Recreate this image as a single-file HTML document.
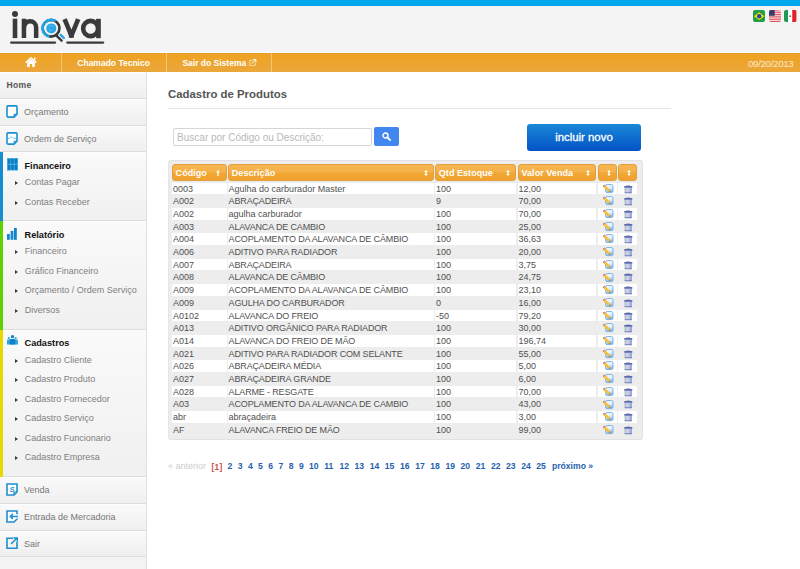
<!DOCTYPE html>
<html><head><meta charset="utf-8">
<style>
*{box-sizing:border-box;margin:0;padding:0}
html,body{width:800px;height:569px;overflow:hidden;background:#fff;font-family:"Liberation Sans",sans-serif;position:relative}
.abs{position:absolute}
#topbar{position:absolute;left:0;top:0;width:800px;height:6px;background:linear-gradient(#03a8ed 80%,#009ee8)}
#header{position:absolute;left:0;top:6px;width:800px;height:46px;background:#f4f4f4}
#logo{position:absolute;left:8px;top:8px}
.flag{position:absolute;top:9.6px;width:12.4px;height:12.4px;border-radius:2px;overflow:hidden}
.flag svg{display:block}
#nav{position:absolute;left:0;top:52.7px;width:800px;height:19.3px;background:linear-gradient(#f0a220,#eaa73b);box-shadow:inset 0 1px #e39a22}
#nav .sep{position:absolute;top:0;width:1px;height:19.3px;background:#f3c47a}
#nav .t{position:absolute;top:-0.2px;height:20px;line-height:20px;font-size:8.5px;font-weight:bold;color:#fff;white-space:nowrap}
#side{position:absolute;left:0;top:72px;width:146.5px;height:497px;background:#f3f3f3;border-right:1px solid #e2e2e2}
.mi{position:absolute;left:0;width:145.5px;background:linear-gradient(#fafafa,#efefef);border-bottom:1px solid #dddddd;box-shadow:inset 0 1px #fdfdfd}
.mi .tx{position:absolute;left:24px;font-size:9px;color:#777;white-space:nowrap}
.mi svg{position:absolute}
.mi+.mi>*,.sec>.hd,.sec>.sub,.sec>svg,.mi+.sec>*{margin-top:-0.5px}
.sec{position:absolute;left:0;width:145.5px;background:linear-gradient(#fafafa,#f0f0f0);border-bottom:1px solid #dddddd;box-shadow:inset 0 1px #fdfdfd}
.sec .bar{position:absolute;left:0;top:0;bottom:-1px;width:2.7px}
.sec .hd{position:absolute;left:24.5px;font-size:9.2px;font-weight:bold;color:#111;white-space:nowrap}
.sec .sub{position:absolute;left:24.7px;font-size:9px;color:#7f7f7f;white-space:nowrap}
.sec .arr{position:absolute;left:15.3px;width:0;height:0;border-left:3.2px solid #3a3a3a;border-top:2.6px solid transparent;border-bottom:2.6px solid transparent}
#title{position:absolute;left:168px;top:87.7px;font-size:11.4px;font-weight:bold;color:#555;white-space:nowrap}
#hr{position:absolute;left:168px;top:107.5px;width:502.6px;height:1px;background:#e6e6e6}
#search{position:absolute;left:173.3px;top:128.3px;width:198.8px;height:17.4px;border:1px solid #d6d6d6;border-radius:2px;background:#fff}
#search span{position:absolute;left:2.8px;top:2.7px;font-size:10px;color:#b8b8b8;white-space:nowrap}
#sbtn{position:absolute;left:374.4px;top:127.4px;width:24.4px;height:18.2px;background:#4187ef;border-radius:2px}
#inc{position:absolute;left:527.3px;top:124.4px;width:113.3px;height:27px;border-radius:3px;background:linear-gradient(#1a88d8,#0252c6);color:#fff;font-size:11.4px;text-align:center;line-height:27px;-webkit-text-stroke:0.3px #fff}
#tbl{position:absolute;left:168px;top:159.8px;width:475.2px;height:280.2px;background:#ededed;border-radius:3px;border:1px solid #e2e2e2;border-left-color:#e6e6e6}
.h{position:absolute;top:164.3px;height:16.3px;border-radius:3px;background:linear-gradient(#f7b551,#f5b24a 45%,#f2a733 55%,#f0a22c);border:1px solid #e29d3c}
.h b{position:absolute;left:2.6px;top:2.5px;font-size:9px;letter-spacing:0.05px;color:#fff;white-space:nowrap}
.h i{position:absolute;top:4.7px;width:4px;height:6px}
.h i svg{display:block}
.c{position:absolute}
.c span{position:absolute;top:1.1px;font-size:9px;color:#505050;white-space:nowrap}
.ic{position:absolute;display:block}
.ic svg{display:block}
#pag{position:absolute;left:0;top:460px}
#pag a{position:absolute;top:1.2px;font-size:8.6px;font-weight:bold;color:#1f62ad;white-space:nowrap}
</style></head><body>
<div id="topbar"></div>
<div id="header"></div>
<svg id="logo" width="100" height="40" viewBox="8 8 100 40">
  <circle cx="15.0" cy="14.0" r="3.0" fill="#3a3a3c"/>
  <rect x="12.7" y="18.7" width="4.6" height="19.4" fill="#3a3a3c"/>
  <path d="M23.95 38.1V27.4a6.1 6.1 0 0 1 12.2 0V38.1" fill="none" stroke="#3a3a3c" stroke-width="4.5"/>
  <rect x="21.7" y="18.7" width="4.5" height="9" fill="#3a3a3c"/>
  <circle cx="51.05" cy="28.25" r="8.4" fill="none" stroke="#38383a" stroke-width="2.6"/>
  <circle cx="51.05" cy="28.25" r="8.4" fill="none" stroke="#1fa6e8" stroke-width="2.6" stroke-dasharray="29.3 100" stroke-dashoffset="-14.8"/>
  <circle cx="51.3" cy="28.4" r="5.0" fill="#2aa8e6"/>
  <path d="M49.2 26.2l1.4 -1.1M51.8 25.3l0.9 1.4M49.6 29.6l1.7 1.1" stroke="#8fd3f3" stroke-width="0.8"/>
  <path d="M56.2 35.3L61.6 40.7" stroke="#38383a" stroke-width="2.4" stroke-linecap="round"/>
  <path d="M60.6 34.9L63.9 38.0" stroke="#1fa6e8" stroke-width="2.3" stroke-linecap="round"/>
  <path d="M64.6 19.2L71.4 35.6L78.2 19.2" fill="none" stroke="#3a3a3c" stroke-width="4.6" stroke-linejoin="round"/>
  <rect x="68.8" y="33.5" width="5.2" height="4.1" fill="#3a3a3c"/>
  <ellipse cx="90.6" cy="28.5" rx="7.45" ry="7.6" fill="none" stroke="#3a3a3c" stroke-width="4.6"/>
  <rect x="96.1" y="18.8" width="4.7" height="19.4" fill="#3a3a3c"/>
  <rect x="10" y="41.4" width="46.2" height="2.3" rx="1.15" fill="#3a3a3c"/>
  <rect x="66.1" y="41.4" width="38.2" height="2.3" rx="1.15" fill="#3a3a3c"/>
</svg>
<div class="flag" style="left:752.6px">
  <svg width="12.4" height="12.4" viewBox="0 0 12 12"><rect width="12" height="12" fill="#229e45"/><path d="M6 2.2L11 6L6 9.8L1 6z" fill="#f8e509"/><circle cx="6" cy="6" r="2.2" fill="#2b49a3"/></svg>
</div>
<div class="flag" style="left:768.5px">
  <svg width="12.4" height="12.4" viewBox="0 0 12 12"><rect width="12" height="12" fill="#fff"/><path d="M0 0.9h12M0 2.6h12M0 4.3h12M0 6h12M0 7.7h12M0 9.4h12M0 11.1h12" stroke="#d9333f" stroke-width="0.85"/><rect width="5.5" height="5.6" fill="#3c3b6e"/></svg>
</div>
<div class="flag" style="left:784.2px">
  <svg width="12.4" height="12.4" viewBox="0 0 12 12"><rect width="4" height="12" fill="#1f9a52"/><rect x="4" width="4" height="12" fill="#fff"/><rect x="8" width="4" height="12" fill="#e3202b"/><circle cx="6" cy="6" r="0.9" fill="#8a6a2a"/></svg>
</div>

<div id="nav">
  <svg class="abs" style="left:25px;top:4.3px" width="12" height="10.2" viewBox="0 0 12 10.2"><path d="M0.7 5.6L6 0.9L11.3 5.6" fill="none" stroke="#fff" stroke-width="1.5"/><path d="M2.2 5.4L6 2.2L9.8 5.4V10.2H7.2V7H4.8V10.2H2.2z" fill="#fff"/><rect x="9" y="0.3" width="1.4" height="3.2" fill="#fff"/></svg>
  <div class="sep" style="left:61px"></div>
  <div class="t" style="left:77.3px">Chamado Tecnico</div>
  <div class="sep" style="left:166.3px"></div>
  <div class="t" style="left:182.4px">Sair do Sistema</div>
  <svg class="abs" style="left:249px;top:6.3px" width="7.5" height="7.5" viewBox="0 0 7.5 7.5"><path d="M4.2 1.2H0.8V6.7H6.3V3.6" fill="none" stroke="#f8dcae" stroke-width="1"/><path d="M2.8 4.7L6.6 0.9M4.4 0.6h2.5v2.5" fill="none" stroke="#fff" stroke-width="1"/></svg>
  <div class="sep" style="left:271.2px"></div>
  <div class="t" style="left:748px;top:1px;font-weight:normal;font-size:9.9px;letter-spacing:-0.4px;color:#fbe8c8">09/20/2013</div>
</div>

<div id="side">
  <div class="mi" style="top:0;height:27px;background:linear-gradient(#f9f9f9,#efefef)"><div class="tx" style="left:6.6px;top:8.1px;font-weight:bold;color:#555;font-size:8.6px;letter-spacing:0.25px">Home</div></div>
  <div class="mi" style="top:27px;height:26.7px">
    <svg style="left:6.2px;top:6.5px" width="12" height="13" viewBox="0 0 12 13"><path d="M2 0.9h8q1 0 1 1v7.2l-3 3H2q-1 0-1-1V1.9q0-1 1-1z" fill="#fff" stroke="#1c8fd1" stroke-width="1.6"/><path d="M8.2 12V9.3h2.8" fill="none" stroke="#1c8fd1" stroke-width="1.1"/></svg>
    <div class="tx" style="top:8.9px">Orçamento</div></div>
  <div class="mi" style="top:53.7px;height:26.3px">
    <svg style="left:6.2px;top:6.8px" width="12" height="13" viewBox="0 0 12 13"><path d="M2 0.9h8q1 0 1 1v7.2l-3 3H2q-1 0-1-1V1.9q0-1 1-1z" fill="#fff" stroke="#1c8fd1" stroke-width="1.6"/><path d="M8.2 12V9.3h2.8" fill="none" stroke="#1c8fd1" stroke-width="1.1"/><path d="M2 6.6Q3.5 6.4 4.6 5.3Q5.5 4.5 6.4 5.5Q7.6 6.6 10 6.4" fill="none" stroke="#5ec3ea" stroke-width="0.9"/></svg>
    <div class="tx" style="top:8.7px">Ordem de Serviço</div></div>

  <div class="sec" style="top:80px;height:69px">
    <div class="bar" style="background:#178ccf"></div>
    <svg style="position:absolute;left:6.9px;top:6.6px" width="11" height="12.6" viewBox="0 0 11 12.6"><rect width="11" height="12.6" fill="#4fb2e6"/><rect x="0.8" y="0.8" width="2.6" height="5" fill="#0a7cc4"/><rect x="4.2" y="0.8" width="2.6" height="5" fill="#0a7cc4"/><rect x="7.6" y="0.8" width="2.6" height="5" fill="#0a7cc4"/><rect x="0.8" y="6.8" width="2.6" height="5" fill="#0a7cc4"/><rect x="4.2" y="6.8" width="2.6" height="5" fill="#0a7cc4"/><rect x="7.6" y="6.8" width="2.6" height="5" fill="#0a7cc4"/></svg>
    <div class="hd" style="top:9.5px">Financeiro</div>
    <i class="arr" style="top:8.2px;margin-top:20.9px"></i><div class="sub" style="top:25.5px">Contas Pagar</div>
    <i class="arr" style="top:27.7px;margin-top:20.9px"></i><div class="sub" style="top:45.0px">Contas Receber</div>
  </div>

  <div class="sec" style="top:149px;height:108.8px">
    <div class="bar" style="background:#5fd000"></div>
    <svg style="position:absolute;left:7.2px;top:7.5px" width="10" height="12" viewBox="0 0 10 12"><rect x="0" y="6" width="2.8" height="5.8" fill="#1185cc"/><rect x="3.6" y="2.9" width="2.8" height="8.9" fill="#1789d0"/><rect x="7" y="0" width="2.8" height="11.8" fill="#1185cc"/></svg>
    <div class="hd" style="top:9.2px">Relatório</div>
    <i class="arr" style="top:8.2px;margin-top:20.9px"></i><div class="sub" style="top:25.5px">Financeiro</div>
    <i class="arr" style="top:27.7px;margin-top:20.9px"></i><div class="sub" style="top:45.0px">Gráfico Financeiro</div>
    <i class="arr" style="top:47.2px;margin-top:20.9px"></i><div class="sub" style="top:64.5px">Orçamento / Ordem Serviço</div>
    <i class="arr" style="top:66.7px;margin-top:20.9px"></i><div class="sub" style="top:84.0px">Diversos</div>
  </div>

  <div class="sec" style="top:257.8px;height:147.1px">
    <div class="bar" style="background:#e6d800"></div>
    <svg style="position:absolute;left:6.6px;top:6.1px" width="11" height="10" viewBox="0 0 11 10"><circle cx="5.5" cy="1.7" r="1.65" fill="#0e82c8"/><circle cx="1.8" cy="3.2" r="1.1" fill="#3aa4e0"/><circle cx="8.7" cy="3.2" r="1.1" fill="#3aa4e0"/><path d="M0 5.6q0-1 1-1h9q1 0 1 1v3.9h-11z" fill="#3aa4e0"/><path d="M2.6 9.5V5.3q0-1.4 1.4-1.4h3q1.4 0 1.4 1.4V9.5z" fill="#0e82c8"/></svg>
    <div class="hd" style="top:8.6px">Cadastros</div>
    <i class="arr" style="top:8.2px;margin-top:20.9px"></i><div class="sub" style="top:25.5px">Cadastro Cliente</div>
    <i class="arr" style="top:27.7px;margin-top:20.9px"></i><div class="sub" style="top:45.0px">Cadastro Produto</div>
    <i class="arr" style="top:47.2px;margin-top:20.9px"></i><div class="sub" style="top:64.5px">Cadastro Fornecedor</div>
    <i class="arr" style="top:66.7px;margin-top:20.9px"></i><div class="sub" style="top:84.0px">Cadastro Serviço</div>
    <i class="arr" style="top:86.2px;margin-top:20.9px"></i><div class="sub" style="top:103.5px">Cadastro Funcionario</div>
    <i class="arr" style="top:105.7px;margin-top:20.9px"></i><div class="sub" style="top:123.0px">Cadastro Empresa</div>
  </div>

  <div class="mi" style="top:404.9px;height:27px">
    <svg style="left:6.2px;top:6.1px" width="12" height="13" viewBox="0 0 12 13"><path d="M1 1h10v8l-3 3H1z" fill="#fff" stroke="#1c8fd1" stroke-width="1.6"/><path d="M8 12v-3h3" fill="none" stroke="#1c8fd1" stroke-width="1.2"/><text x="3.5" y="8.8" font-size="7.5" font-weight="bold" font-style="italic" fill="#1c8fd1" font-family="Liberation Sans">S</text></svg>
    <div class="tx" style="top:8.5px">Venda</div></div>
  <div class="mi" style="top:431.9px;height:27px">
    <svg style="left:6.2px;top:6.8px" width="12" height="13" viewBox="0 0 12 13"><path d="M11 4.2V1H1v11h7l3-3V8.6" fill="#fff" stroke="#1c8fd1" stroke-width="1.6"/><path d="M12 6.4H4.6M6.9 3.9L4.3 6.4L6.9 8.9" fill="none" stroke="#1c8fd1" stroke-width="1.5"/></svg>
    <div class="tx" style="top:8.5px">Entrada de Mercadoria</div></div>
  <div class="mi" style="top:458.9px;height:26px">
    <svg style="left:6.2px;top:6.5px" width="12" height="12" viewBox="0 0 12 12"><path d="M7 1.2H1v10h10V5" fill="none" stroke="#1c8fd1" stroke-width="1.6"/><path d="M5 7L10.5 1.5M7.5 1h3.8v3.8" fill="none" stroke="#1c8fd1" stroke-width="1.5"/></svg>
    <div class="tx" style="top:8.2px">Sair</div></div>
</div>

<div id="title">Cadastro de Produtos</div>
<div id="hr"></div>
<div id="search"><span>Buscar por Código ou Descrição:</span></div>
<div id="sbtn"><svg class="abs" style="left:8px;top:5px" width="9" height="9" viewBox="0 0 9 9"><circle cx="3.5" cy="3.5" r="2.5" fill="none" stroke="#fff" stroke-width="1.4"/><path d="M5.3 5.3L8 8" stroke="#fff" stroke-width="1.8" stroke-linecap="round"/></svg></div>
<div id="inc">incluir novo</div>

<div id="tbl"></div>
<div class="h" style="left:172px;width:54.7px"><b>Código</b><i style="right:6.0px"><svg class="si" width="4" height="6" viewBox="0 0 4 6"><path d="M2 0L4 2.4H2.7V6H1.3V2.4H0z" fill="#fff" fill-opacity="0.95"/></svg></i></div><div class="h" style="left:228.2px;width:205.5px"><b>Descrição</b><i style="right:5.0px"><svg class="si" width="4" height="6" viewBox="0 0 4 6"><path d="M2 0L3.8 2.1H2.7V3.9H3.8L2 6L0.2 3.9H1.3V2.1H0.2z" fill="#fff"/></svg></i></div><div class="h" style="left:435.2px;width:80.9px"><b>Qtd Estoque</b><i style="right:5.0px"><svg class="si" width="4" height="6" viewBox="0 0 4 6"><path d="M2 0L3.8 2.1H2.7V3.9H3.8L2 6L0.2 3.9H1.3V2.1H0.2z" fill="#fff"/></svg></i></div><div class="h" style="left:517.9px;width:78.4px"><b>Valor Venda</b><i style="right:5.0px"><svg class="si" width="4" height="6" viewBox="0 0 4 6"><path d="M2 0L3.8 2.1H2.7V3.9H3.8L2 6L0.2 3.9H1.3V2.1H0.2z" fill="#fff"/></svg></i></div><div class="h" style="left:598.2px;width:18.5px"><b></b><i style="right:5.0px"><svg class="si" width="4" height="6" viewBox="0 0 4 6"><path d="M2 0L3.8 2.1H2.7V3.9H3.8L2 6L0.2 3.9H1.3V2.1H0.2z" fill="#fff"/></svg></i></div><div class="h" style="left:618.1px;width:18.8px"><b></b><i style="right:5.0px"><svg class="si" width="4" height="6" viewBox="0 0 4 6"><path d="M2 0L3.8 2.1H2.7V3.9H3.8L2 6L0.2 3.9H1.3V2.1H0.2z" fill="#fff"/></svg></i></div>
<div class="c" style="left:172px;width:54.7px;top:182.50px;height:11.80px;background:#fff;"><span style="left:1.0px;">0003</span></div><div class="c" style="left:228.2px;width:205.5px;top:182.50px;height:11.80px;background:#fff;"><span style="left:0.4px;">Agulha do carburador Master</span></div><div class="c" style="left:435.2px;width:80.9px;top:182.50px;height:11.80px;background:#fff;"><span style="left:0.9px;">100</span></div><div class="c" style="left:517.9px;width:78.4px;top:182.50px;height:11.80px;background:#fff;"><span style="left:0.5px;">12,00</span></div><div class="c" style="left:598.2px;width:18.5px;top:182.50px;height:11.80px;background:#fff;"><i class="ic" style="left:4.4px;top:1.2px"><svg width="11" height="10" viewBox="0 0 11 10"><defs><linearGradient id="dg" x1="0" y1="0" x2="0.3" y2="1"><stop offset="0" stop-color="#f2f9ff"/><stop offset="0.55" stop-color="#e2f0fc"/><stop offset="1" stop-color="#86bdec"/></linearGradient></defs><rect x="2.6" y="0.5" width="7.4" height="8.1" rx="1.5" fill="url(#dg)" stroke="#68a6de" stroke-width="0.8"/><path d="M0.4 3.1L2.0 1.3L7.3 6.1L5.7 7.9z" fill="#f2b628"/><path d="M5.7 7.9L7.3 6.1L7.6 7.0L6.6 8.1z" fill="#5b5030" opacity="0.7"/><path d="M1.2 2.2L6.5 7.0" stroke="#fbe08a" stroke-width="0.5"/><path d="M-0.35 2.4L1.25 0.6L2.0 1.3L0.4 3.1z" fill="#e05a48"/></svg></i></div><div class="c" style="left:618.1px;width:18.8px;top:182.50px;height:11.80px;background:#fff;"><i class="ic" style="left:4.6px;top:1.0px"><svg width="10" height="10" viewBox="0 0 10 10"><defs><linearGradient id="tg" x1="0" y1="0" x2="1" y2="0"><stop offset="0" stop-color="#a9b0c6"/><stop offset="0.35" stop-color="#d4d8e2"/><stop offset="0.7" stop-color="#b3bfe6"/><stop offset="1" stop-color="#7f92d8"/></linearGradient></defs><path d="M1.6 3.5h7.2v5.2q0 0.5-0.5 0.5h-6.2q-0.5 0-0.5-0.5z" fill="url(#tg)"/><rect x="1.8" y="8.2" width="6.8" height="1.0" fill="#5f6fae" opacity="0.8"/><path d="M1.3 2.4q0-0.5 0.6-0.5h6.8q0.6 0 0.6 0.5v1.3h-8z" fill="#5a69b0"/><rect x="3.2" y="1.1" width="4" height="1.0" rx="0.5" fill="#b8bccb"/></svg></i></div>
<div class="c" style="left:172px;width:54.7px;top:195.20px;height:11.80px;"><span style="left:1.0px;">A002</span></div><div class="c" style="left:228.2px;width:205.5px;top:195.20px;height:11.80px;"><span style="left:0.4px;letter-spacing:-0.15px;">ABRAÇADEIRA</span></div><div class="c" style="left:435.2px;width:80.9px;top:195.20px;height:11.80px;"><span style="left:0.9px;">9</span></div><div class="c" style="left:517.9px;width:78.4px;top:195.20px;height:11.80px;"><span style="left:0.5px;">70,00</span></div><div class="c" style="left:598.2px;width:18.5px;top:195.20px;height:11.80px;"><i class="ic" style="left:4.4px;top:1.2px"><svg width="11" height="10" viewBox="0 0 11 10"><defs><linearGradient id="dg" x1="0" y1="0" x2="0.3" y2="1"><stop offset="0" stop-color="#f2f9ff"/><stop offset="0.55" stop-color="#e2f0fc"/><stop offset="1" stop-color="#86bdec"/></linearGradient></defs><rect x="2.6" y="0.5" width="7.4" height="8.1" rx="1.5" fill="url(#dg)" stroke="#68a6de" stroke-width="0.8"/><path d="M0.4 3.1L2.0 1.3L7.3 6.1L5.7 7.9z" fill="#f2b628"/><path d="M5.7 7.9L7.3 6.1L7.6 7.0L6.6 8.1z" fill="#5b5030" opacity="0.7"/><path d="M1.2 2.2L6.5 7.0" stroke="#fbe08a" stroke-width="0.5"/><path d="M-0.35 2.4L1.25 0.6L2.0 1.3L0.4 3.1z" fill="#e05a48"/></svg></i></div><div class="c" style="left:618.1px;width:18.8px;top:195.20px;height:11.80px;"><i class="ic" style="left:4.6px;top:1.0px"><svg width="10" height="10" viewBox="0 0 10 10"><defs><linearGradient id="tg" x1="0" y1="0" x2="1" y2="0"><stop offset="0" stop-color="#a9b0c6"/><stop offset="0.35" stop-color="#d4d8e2"/><stop offset="0.7" stop-color="#b3bfe6"/><stop offset="1" stop-color="#7f92d8"/></linearGradient></defs><path d="M1.6 3.5h7.2v5.2q0 0.5-0.5 0.5h-6.2q-0.5 0-0.5-0.5z" fill="url(#tg)"/><rect x="1.8" y="8.2" width="6.8" height="1.0" fill="#5f6fae" opacity="0.8"/><path d="M1.3 2.4q0-0.5 0.6-0.5h6.8q0.6 0 0.6 0.5v1.3h-8z" fill="#5a69b0"/><rect x="3.2" y="1.1" width="4" height="1.0" rx="0.5" fill="#b8bccb"/></svg></i></div>
<div class="c" style="left:172px;width:54.7px;top:207.90px;height:11.80px;background:#fff;"><span style="left:1.0px;">A002</span></div><div class="c" style="left:228.2px;width:205.5px;top:207.90px;height:11.80px;background:#fff;"><span style="left:0.4px;">agulha carburador</span></div><div class="c" style="left:435.2px;width:80.9px;top:207.90px;height:11.80px;background:#fff;"><span style="left:0.9px;">100</span></div><div class="c" style="left:517.9px;width:78.4px;top:207.90px;height:11.80px;background:#fff;"><span style="left:0.5px;">70,00</span></div><div class="c" style="left:598.2px;width:18.5px;top:207.90px;height:11.80px;background:#fff;"><i class="ic" style="left:4.4px;top:1.2px"><svg width="11" height="10" viewBox="0 0 11 10"><defs><linearGradient id="dg" x1="0" y1="0" x2="0.3" y2="1"><stop offset="0" stop-color="#f2f9ff"/><stop offset="0.55" stop-color="#e2f0fc"/><stop offset="1" stop-color="#86bdec"/></linearGradient></defs><rect x="2.6" y="0.5" width="7.4" height="8.1" rx="1.5" fill="url(#dg)" stroke="#68a6de" stroke-width="0.8"/><path d="M0.4 3.1L2.0 1.3L7.3 6.1L5.7 7.9z" fill="#f2b628"/><path d="M5.7 7.9L7.3 6.1L7.6 7.0L6.6 8.1z" fill="#5b5030" opacity="0.7"/><path d="M1.2 2.2L6.5 7.0" stroke="#fbe08a" stroke-width="0.5"/><path d="M-0.35 2.4L1.25 0.6L2.0 1.3L0.4 3.1z" fill="#e05a48"/></svg></i></div><div class="c" style="left:618.1px;width:18.8px;top:207.90px;height:11.80px;background:#fff;"><i class="ic" style="left:4.6px;top:1.0px"><svg width="10" height="10" viewBox="0 0 10 10"><defs><linearGradient id="tg" x1="0" y1="0" x2="1" y2="0"><stop offset="0" stop-color="#a9b0c6"/><stop offset="0.35" stop-color="#d4d8e2"/><stop offset="0.7" stop-color="#b3bfe6"/><stop offset="1" stop-color="#7f92d8"/></linearGradient></defs><path d="M1.6 3.5h7.2v5.2q0 0.5-0.5 0.5h-6.2q-0.5 0-0.5-0.5z" fill="url(#tg)"/><rect x="1.8" y="8.2" width="6.8" height="1.0" fill="#5f6fae" opacity="0.8"/><path d="M1.3 2.4q0-0.5 0.6-0.5h6.8q0.6 0 0.6 0.5v1.3h-8z" fill="#5a69b0"/><rect x="3.2" y="1.1" width="4" height="1.0" rx="0.5" fill="#b8bccb"/></svg></i></div>
<div class="c" style="left:172px;width:54.7px;top:220.60px;height:11.80px;"><span style="left:1.0px;">A003</span></div><div class="c" style="left:228.2px;width:205.5px;top:220.60px;height:11.80px;"><span style="left:0.4px;letter-spacing:-0.15px;">ALAVANCA DE CAMBIO</span></div><div class="c" style="left:435.2px;width:80.9px;top:220.60px;height:11.80px;"><span style="left:0.9px;">100</span></div><div class="c" style="left:517.9px;width:78.4px;top:220.60px;height:11.80px;"><span style="left:0.5px;">25,00</span></div><div class="c" style="left:598.2px;width:18.5px;top:220.60px;height:11.80px;"><i class="ic" style="left:4.4px;top:1.2px"><svg width="11" height="10" viewBox="0 0 11 10"><defs><linearGradient id="dg" x1="0" y1="0" x2="0.3" y2="1"><stop offset="0" stop-color="#f2f9ff"/><stop offset="0.55" stop-color="#e2f0fc"/><stop offset="1" stop-color="#86bdec"/></linearGradient></defs><rect x="2.6" y="0.5" width="7.4" height="8.1" rx="1.5" fill="url(#dg)" stroke="#68a6de" stroke-width="0.8"/><path d="M0.4 3.1L2.0 1.3L7.3 6.1L5.7 7.9z" fill="#f2b628"/><path d="M5.7 7.9L7.3 6.1L7.6 7.0L6.6 8.1z" fill="#5b5030" opacity="0.7"/><path d="M1.2 2.2L6.5 7.0" stroke="#fbe08a" stroke-width="0.5"/><path d="M-0.35 2.4L1.25 0.6L2.0 1.3L0.4 3.1z" fill="#e05a48"/></svg></i></div><div class="c" style="left:618.1px;width:18.8px;top:220.60px;height:11.80px;"><i class="ic" style="left:4.6px;top:1.0px"><svg width="10" height="10" viewBox="0 0 10 10"><defs><linearGradient id="tg" x1="0" y1="0" x2="1" y2="0"><stop offset="0" stop-color="#a9b0c6"/><stop offset="0.35" stop-color="#d4d8e2"/><stop offset="0.7" stop-color="#b3bfe6"/><stop offset="1" stop-color="#7f92d8"/></linearGradient></defs><path d="M1.6 3.5h7.2v5.2q0 0.5-0.5 0.5h-6.2q-0.5 0-0.5-0.5z" fill="url(#tg)"/><rect x="1.8" y="8.2" width="6.8" height="1.0" fill="#5f6fae" opacity="0.8"/><path d="M1.3 2.4q0-0.5 0.6-0.5h6.8q0.6 0 0.6 0.5v1.3h-8z" fill="#5a69b0"/><rect x="3.2" y="1.1" width="4" height="1.0" rx="0.5" fill="#b8bccb"/></svg></i></div>
<div class="c" style="left:172px;width:54.7px;top:233.30px;height:11.80px;background:#fff;"><span style="left:1.0px;">A004</span></div><div class="c" style="left:228.2px;width:205.5px;top:233.30px;height:11.80px;background:#fff;"><span style="left:0.4px;letter-spacing:-0.15px;">ACOPLAMENTO DA ALAVANCA DE CÂMBIO</span></div><div class="c" style="left:435.2px;width:80.9px;top:233.30px;height:11.80px;background:#fff;"><span style="left:0.9px;">100</span></div><div class="c" style="left:517.9px;width:78.4px;top:233.30px;height:11.80px;background:#fff;"><span style="left:0.5px;">36,63</span></div><div class="c" style="left:598.2px;width:18.5px;top:233.30px;height:11.80px;background:#fff;"><i class="ic" style="left:4.4px;top:1.2px"><svg width="11" height="10" viewBox="0 0 11 10"><defs><linearGradient id="dg" x1="0" y1="0" x2="0.3" y2="1"><stop offset="0" stop-color="#f2f9ff"/><stop offset="0.55" stop-color="#e2f0fc"/><stop offset="1" stop-color="#86bdec"/></linearGradient></defs><rect x="2.6" y="0.5" width="7.4" height="8.1" rx="1.5" fill="url(#dg)" stroke="#68a6de" stroke-width="0.8"/><path d="M0.4 3.1L2.0 1.3L7.3 6.1L5.7 7.9z" fill="#f2b628"/><path d="M5.7 7.9L7.3 6.1L7.6 7.0L6.6 8.1z" fill="#5b5030" opacity="0.7"/><path d="M1.2 2.2L6.5 7.0" stroke="#fbe08a" stroke-width="0.5"/><path d="M-0.35 2.4L1.25 0.6L2.0 1.3L0.4 3.1z" fill="#e05a48"/></svg></i></div><div class="c" style="left:618.1px;width:18.8px;top:233.30px;height:11.80px;background:#fff;"><i class="ic" style="left:4.6px;top:1.0px"><svg width="10" height="10" viewBox="0 0 10 10"><defs><linearGradient id="tg" x1="0" y1="0" x2="1" y2="0"><stop offset="0" stop-color="#a9b0c6"/><stop offset="0.35" stop-color="#d4d8e2"/><stop offset="0.7" stop-color="#b3bfe6"/><stop offset="1" stop-color="#7f92d8"/></linearGradient></defs><path d="M1.6 3.5h7.2v5.2q0 0.5-0.5 0.5h-6.2q-0.5 0-0.5-0.5z" fill="url(#tg)"/><rect x="1.8" y="8.2" width="6.8" height="1.0" fill="#5f6fae" opacity="0.8"/><path d="M1.3 2.4q0-0.5 0.6-0.5h6.8q0.6 0 0.6 0.5v1.3h-8z" fill="#5a69b0"/><rect x="3.2" y="1.1" width="4" height="1.0" rx="0.5" fill="#b8bccb"/></svg></i></div>
<div class="c" style="left:172px;width:54.7px;top:246.00px;height:11.80px;"><span style="left:1.0px;">A006</span></div><div class="c" style="left:228.2px;width:205.5px;top:246.00px;height:11.80px;"><span style="left:0.4px;letter-spacing:-0.15px;">ADITIVO PARA RADIADOR</span></div><div class="c" style="left:435.2px;width:80.9px;top:246.00px;height:11.80px;"><span style="left:0.9px;">100</span></div><div class="c" style="left:517.9px;width:78.4px;top:246.00px;height:11.80px;"><span style="left:0.5px;">20,00</span></div><div class="c" style="left:598.2px;width:18.5px;top:246.00px;height:11.80px;"><i class="ic" style="left:4.4px;top:1.2px"><svg width="11" height="10" viewBox="0 0 11 10"><defs><linearGradient id="dg" x1="0" y1="0" x2="0.3" y2="1"><stop offset="0" stop-color="#f2f9ff"/><stop offset="0.55" stop-color="#e2f0fc"/><stop offset="1" stop-color="#86bdec"/></linearGradient></defs><rect x="2.6" y="0.5" width="7.4" height="8.1" rx="1.5" fill="url(#dg)" stroke="#68a6de" stroke-width="0.8"/><path d="M0.4 3.1L2.0 1.3L7.3 6.1L5.7 7.9z" fill="#f2b628"/><path d="M5.7 7.9L7.3 6.1L7.6 7.0L6.6 8.1z" fill="#5b5030" opacity="0.7"/><path d="M1.2 2.2L6.5 7.0" stroke="#fbe08a" stroke-width="0.5"/><path d="M-0.35 2.4L1.25 0.6L2.0 1.3L0.4 3.1z" fill="#e05a48"/></svg></i></div><div class="c" style="left:618.1px;width:18.8px;top:246.00px;height:11.80px;"><i class="ic" style="left:4.6px;top:1.0px"><svg width="10" height="10" viewBox="0 0 10 10"><defs><linearGradient id="tg" x1="0" y1="0" x2="1" y2="0"><stop offset="0" stop-color="#a9b0c6"/><stop offset="0.35" stop-color="#d4d8e2"/><stop offset="0.7" stop-color="#b3bfe6"/><stop offset="1" stop-color="#7f92d8"/></linearGradient></defs><path d="M1.6 3.5h7.2v5.2q0 0.5-0.5 0.5h-6.2q-0.5 0-0.5-0.5z" fill="url(#tg)"/><rect x="1.8" y="8.2" width="6.8" height="1.0" fill="#5f6fae" opacity="0.8"/><path d="M1.3 2.4q0-0.5 0.6-0.5h6.8q0.6 0 0.6 0.5v1.3h-8z" fill="#5a69b0"/><rect x="3.2" y="1.1" width="4" height="1.0" rx="0.5" fill="#b8bccb"/></svg></i></div>
<div class="c" style="left:172px;width:54.7px;top:258.70px;height:11.80px;background:#fff;"><span style="left:1.0px;">A007</span></div><div class="c" style="left:228.2px;width:205.5px;top:258.70px;height:11.80px;background:#fff;"><span style="left:0.4px;letter-spacing:-0.15px;">ABRAÇADEIRA</span></div><div class="c" style="left:435.2px;width:80.9px;top:258.70px;height:11.80px;background:#fff;"><span style="left:0.9px;">100</span></div><div class="c" style="left:517.9px;width:78.4px;top:258.70px;height:11.80px;background:#fff;"><span style="left:0.5px;">3,75</span></div><div class="c" style="left:598.2px;width:18.5px;top:258.70px;height:11.80px;background:#fff;"><i class="ic" style="left:4.4px;top:1.2px"><svg width="11" height="10" viewBox="0 0 11 10"><defs><linearGradient id="dg" x1="0" y1="0" x2="0.3" y2="1"><stop offset="0" stop-color="#f2f9ff"/><stop offset="0.55" stop-color="#e2f0fc"/><stop offset="1" stop-color="#86bdec"/></linearGradient></defs><rect x="2.6" y="0.5" width="7.4" height="8.1" rx="1.5" fill="url(#dg)" stroke="#68a6de" stroke-width="0.8"/><path d="M0.4 3.1L2.0 1.3L7.3 6.1L5.7 7.9z" fill="#f2b628"/><path d="M5.7 7.9L7.3 6.1L7.6 7.0L6.6 8.1z" fill="#5b5030" opacity="0.7"/><path d="M1.2 2.2L6.5 7.0" stroke="#fbe08a" stroke-width="0.5"/><path d="M-0.35 2.4L1.25 0.6L2.0 1.3L0.4 3.1z" fill="#e05a48"/></svg></i></div><div class="c" style="left:618.1px;width:18.8px;top:258.70px;height:11.80px;background:#fff;"><i class="ic" style="left:4.6px;top:1.0px"><svg width="10" height="10" viewBox="0 0 10 10"><defs><linearGradient id="tg" x1="0" y1="0" x2="1" y2="0"><stop offset="0" stop-color="#a9b0c6"/><stop offset="0.35" stop-color="#d4d8e2"/><stop offset="0.7" stop-color="#b3bfe6"/><stop offset="1" stop-color="#7f92d8"/></linearGradient></defs><path d="M1.6 3.5h7.2v5.2q0 0.5-0.5 0.5h-6.2q-0.5 0-0.5-0.5z" fill="url(#tg)"/><rect x="1.8" y="8.2" width="6.8" height="1.0" fill="#5f6fae" opacity="0.8"/><path d="M1.3 2.4q0-0.5 0.6-0.5h6.8q0.6 0 0.6 0.5v1.3h-8z" fill="#5a69b0"/><rect x="3.2" y="1.1" width="4" height="1.0" rx="0.5" fill="#b8bccb"/></svg></i></div>
<div class="c" style="left:172px;width:54.7px;top:271.40px;height:11.80px;"><span style="left:1.0px;">A008</span></div><div class="c" style="left:228.2px;width:205.5px;top:271.40px;height:11.80px;"><span style="left:0.4px;letter-spacing:-0.15px;">ALAVANCA DE CÂMBIO</span></div><div class="c" style="left:435.2px;width:80.9px;top:271.40px;height:11.80px;"><span style="left:0.9px;">100</span></div><div class="c" style="left:517.9px;width:78.4px;top:271.40px;height:11.80px;"><span style="left:0.5px;">24,75</span></div><div class="c" style="left:598.2px;width:18.5px;top:271.40px;height:11.80px;"><i class="ic" style="left:4.4px;top:1.2px"><svg width="11" height="10" viewBox="0 0 11 10"><defs><linearGradient id="dg" x1="0" y1="0" x2="0.3" y2="1"><stop offset="0" stop-color="#f2f9ff"/><stop offset="0.55" stop-color="#e2f0fc"/><stop offset="1" stop-color="#86bdec"/></linearGradient></defs><rect x="2.6" y="0.5" width="7.4" height="8.1" rx="1.5" fill="url(#dg)" stroke="#68a6de" stroke-width="0.8"/><path d="M0.4 3.1L2.0 1.3L7.3 6.1L5.7 7.9z" fill="#f2b628"/><path d="M5.7 7.9L7.3 6.1L7.6 7.0L6.6 8.1z" fill="#5b5030" opacity="0.7"/><path d="M1.2 2.2L6.5 7.0" stroke="#fbe08a" stroke-width="0.5"/><path d="M-0.35 2.4L1.25 0.6L2.0 1.3L0.4 3.1z" fill="#e05a48"/></svg></i></div><div class="c" style="left:618.1px;width:18.8px;top:271.40px;height:11.80px;"><i class="ic" style="left:4.6px;top:1.0px"><svg width="10" height="10" viewBox="0 0 10 10"><defs><linearGradient id="tg" x1="0" y1="0" x2="1" y2="0"><stop offset="0" stop-color="#a9b0c6"/><stop offset="0.35" stop-color="#d4d8e2"/><stop offset="0.7" stop-color="#b3bfe6"/><stop offset="1" stop-color="#7f92d8"/></linearGradient></defs><path d="M1.6 3.5h7.2v5.2q0 0.5-0.5 0.5h-6.2q-0.5 0-0.5-0.5z" fill="url(#tg)"/><rect x="1.8" y="8.2" width="6.8" height="1.0" fill="#5f6fae" opacity="0.8"/><path d="M1.3 2.4q0-0.5 0.6-0.5h6.8q0.6 0 0.6 0.5v1.3h-8z" fill="#5a69b0"/><rect x="3.2" y="1.1" width="4" height="1.0" rx="0.5" fill="#b8bccb"/></svg></i></div>
<div class="c" style="left:172px;width:54.7px;top:284.10px;height:11.80px;background:#fff;"><span style="left:1.0px;">A009</span></div><div class="c" style="left:228.2px;width:205.5px;top:284.10px;height:11.80px;background:#fff;"><span style="left:0.4px;letter-spacing:-0.15px;">ACOPLAMENTO DA ALAVANCA DE CÂMBIO</span></div><div class="c" style="left:435.2px;width:80.9px;top:284.10px;height:11.80px;background:#fff;"><span style="left:0.9px;">100</span></div><div class="c" style="left:517.9px;width:78.4px;top:284.10px;height:11.80px;background:#fff;"><span style="left:0.5px;">23,10</span></div><div class="c" style="left:598.2px;width:18.5px;top:284.10px;height:11.80px;background:#fff;"><i class="ic" style="left:4.4px;top:1.2px"><svg width="11" height="10" viewBox="0 0 11 10"><defs><linearGradient id="dg" x1="0" y1="0" x2="0.3" y2="1"><stop offset="0" stop-color="#f2f9ff"/><stop offset="0.55" stop-color="#e2f0fc"/><stop offset="1" stop-color="#86bdec"/></linearGradient></defs><rect x="2.6" y="0.5" width="7.4" height="8.1" rx="1.5" fill="url(#dg)" stroke="#68a6de" stroke-width="0.8"/><path d="M0.4 3.1L2.0 1.3L7.3 6.1L5.7 7.9z" fill="#f2b628"/><path d="M5.7 7.9L7.3 6.1L7.6 7.0L6.6 8.1z" fill="#5b5030" opacity="0.7"/><path d="M1.2 2.2L6.5 7.0" stroke="#fbe08a" stroke-width="0.5"/><path d="M-0.35 2.4L1.25 0.6L2.0 1.3L0.4 3.1z" fill="#e05a48"/></svg></i></div><div class="c" style="left:618.1px;width:18.8px;top:284.10px;height:11.80px;background:#fff;"><i class="ic" style="left:4.6px;top:1.0px"><svg width="10" height="10" viewBox="0 0 10 10"><defs><linearGradient id="tg" x1="0" y1="0" x2="1" y2="0"><stop offset="0" stop-color="#a9b0c6"/><stop offset="0.35" stop-color="#d4d8e2"/><stop offset="0.7" stop-color="#b3bfe6"/><stop offset="1" stop-color="#7f92d8"/></linearGradient></defs><path d="M1.6 3.5h7.2v5.2q0 0.5-0.5 0.5h-6.2q-0.5 0-0.5-0.5z" fill="url(#tg)"/><rect x="1.8" y="8.2" width="6.8" height="1.0" fill="#5f6fae" opacity="0.8"/><path d="M1.3 2.4q0-0.5 0.6-0.5h6.8q0.6 0 0.6 0.5v1.3h-8z" fill="#5a69b0"/><rect x="3.2" y="1.1" width="4" height="1.0" rx="0.5" fill="#b8bccb"/></svg></i></div>
<div class="c" style="left:172px;width:54.7px;top:296.80px;height:11.80px;"><span style="left:1.0px;">A009</span></div><div class="c" style="left:228.2px;width:205.5px;top:296.80px;height:11.80px;"><span style="left:0.4px;letter-spacing:-0.15px;">AGULHA DO CARBURADOR</span></div><div class="c" style="left:435.2px;width:80.9px;top:296.80px;height:11.80px;"><span style="left:0.9px;">0</span></div><div class="c" style="left:517.9px;width:78.4px;top:296.80px;height:11.80px;"><span style="left:0.5px;">16,00</span></div><div class="c" style="left:598.2px;width:18.5px;top:296.80px;height:11.80px;"><i class="ic" style="left:4.4px;top:1.2px"><svg width="11" height="10" viewBox="0 0 11 10"><defs><linearGradient id="dg" x1="0" y1="0" x2="0.3" y2="1"><stop offset="0" stop-color="#f2f9ff"/><stop offset="0.55" stop-color="#e2f0fc"/><stop offset="1" stop-color="#86bdec"/></linearGradient></defs><rect x="2.6" y="0.5" width="7.4" height="8.1" rx="1.5" fill="url(#dg)" stroke="#68a6de" stroke-width="0.8"/><path d="M0.4 3.1L2.0 1.3L7.3 6.1L5.7 7.9z" fill="#f2b628"/><path d="M5.7 7.9L7.3 6.1L7.6 7.0L6.6 8.1z" fill="#5b5030" opacity="0.7"/><path d="M1.2 2.2L6.5 7.0" stroke="#fbe08a" stroke-width="0.5"/><path d="M-0.35 2.4L1.25 0.6L2.0 1.3L0.4 3.1z" fill="#e05a48"/></svg></i></div><div class="c" style="left:618.1px;width:18.8px;top:296.80px;height:11.80px;"><i class="ic" style="left:4.6px;top:1.0px"><svg width="10" height="10" viewBox="0 0 10 10"><defs><linearGradient id="tg" x1="0" y1="0" x2="1" y2="0"><stop offset="0" stop-color="#a9b0c6"/><stop offset="0.35" stop-color="#d4d8e2"/><stop offset="0.7" stop-color="#b3bfe6"/><stop offset="1" stop-color="#7f92d8"/></linearGradient></defs><path d="M1.6 3.5h7.2v5.2q0 0.5-0.5 0.5h-6.2q-0.5 0-0.5-0.5z" fill="url(#tg)"/><rect x="1.8" y="8.2" width="6.8" height="1.0" fill="#5f6fae" opacity="0.8"/><path d="M1.3 2.4q0-0.5 0.6-0.5h6.8q0.6 0 0.6 0.5v1.3h-8z" fill="#5a69b0"/><rect x="3.2" y="1.1" width="4" height="1.0" rx="0.5" fill="#b8bccb"/></svg></i></div>
<div class="c" style="left:172px;width:54.7px;top:309.50px;height:11.80px;background:#fff;"><span style="left:1.0px;">A0102</span></div><div class="c" style="left:228.2px;width:205.5px;top:309.50px;height:11.80px;background:#fff;"><span style="left:0.4px;letter-spacing:-0.15px;">ALAVANCA DO FREIO</span></div><div class="c" style="left:435.2px;width:80.9px;top:309.50px;height:11.80px;background:#fff;"><span style="left:0.9px;">-50</span></div><div class="c" style="left:517.9px;width:78.4px;top:309.50px;height:11.80px;background:#fff;"><span style="left:0.5px;">79,20</span></div><div class="c" style="left:598.2px;width:18.5px;top:309.50px;height:11.80px;background:#fff;"><i class="ic" style="left:4.4px;top:1.2px"><svg width="11" height="10" viewBox="0 0 11 10"><defs><linearGradient id="dg" x1="0" y1="0" x2="0.3" y2="1"><stop offset="0" stop-color="#f2f9ff"/><stop offset="0.55" stop-color="#e2f0fc"/><stop offset="1" stop-color="#86bdec"/></linearGradient></defs><rect x="2.6" y="0.5" width="7.4" height="8.1" rx="1.5" fill="url(#dg)" stroke="#68a6de" stroke-width="0.8"/><path d="M0.4 3.1L2.0 1.3L7.3 6.1L5.7 7.9z" fill="#f2b628"/><path d="M5.7 7.9L7.3 6.1L7.6 7.0L6.6 8.1z" fill="#5b5030" opacity="0.7"/><path d="M1.2 2.2L6.5 7.0" stroke="#fbe08a" stroke-width="0.5"/><path d="M-0.35 2.4L1.25 0.6L2.0 1.3L0.4 3.1z" fill="#e05a48"/></svg></i></div><div class="c" style="left:618.1px;width:18.8px;top:309.50px;height:11.80px;background:#fff;"><i class="ic" style="left:4.6px;top:1.0px"><svg width="10" height="10" viewBox="0 0 10 10"><defs><linearGradient id="tg" x1="0" y1="0" x2="1" y2="0"><stop offset="0" stop-color="#a9b0c6"/><stop offset="0.35" stop-color="#d4d8e2"/><stop offset="0.7" stop-color="#b3bfe6"/><stop offset="1" stop-color="#7f92d8"/></linearGradient></defs><path d="M1.6 3.5h7.2v5.2q0 0.5-0.5 0.5h-6.2q-0.5 0-0.5-0.5z" fill="url(#tg)"/><rect x="1.8" y="8.2" width="6.8" height="1.0" fill="#5f6fae" opacity="0.8"/><path d="M1.3 2.4q0-0.5 0.6-0.5h6.8q0.6 0 0.6 0.5v1.3h-8z" fill="#5a69b0"/><rect x="3.2" y="1.1" width="4" height="1.0" rx="0.5" fill="#b8bccb"/></svg></i></div>
<div class="c" style="left:172px;width:54.7px;top:322.20px;height:11.80px;"><span style="left:1.0px;">A013</span></div><div class="c" style="left:228.2px;width:205.5px;top:322.20px;height:11.80px;"><span style="left:0.4px;letter-spacing:-0.15px;">ADITIVO ORGÂNICO PARA RADIADOR</span></div><div class="c" style="left:435.2px;width:80.9px;top:322.20px;height:11.80px;"><span style="left:0.9px;">100</span></div><div class="c" style="left:517.9px;width:78.4px;top:322.20px;height:11.80px;"><span style="left:0.5px;">30,00</span></div><div class="c" style="left:598.2px;width:18.5px;top:322.20px;height:11.80px;"><i class="ic" style="left:4.4px;top:1.2px"><svg width="11" height="10" viewBox="0 0 11 10"><defs><linearGradient id="dg" x1="0" y1="0" x2="0.3" y2="1"><stop offset="0" stop-color="#f2f9ff"/><stop offset="0.55" stop-color="#e2f0fc"/><stop offset="1" stop-color="#86bdec"/></linearGradient></defs><rect x="2.6" y="0.5" width="7.4" height="8.1" rx="1.5" fill="url(#dg)" stroke="#68a6de" stroke-width="0.8"/><path d="M0.4 3.1L2.0 1.3L7.3 6.1L5.7 7.9z" fill="#f2b628"/><path d="M5.7 7.9L7.3 6.1L7.6 7.0L6.6 8.1z" fill="#5b5030" opacity="0.7"/><path d="M1.2 2.2L6.5 7.0" stroke="#fbe08a" stroke-width="0.5"/><path d="M-0.35 2.4L1.25 0.6L2.0 1.3L0.4 3.1z" fill="#e05a48"/></svg></i></div><div class="c" style="left:618.1px;width:18.8px;top:322.20px;height:11.80px;"><i class="ic" style="left:4.6px;top:1.0px"><svg width="10" height="10" viewBox="0 0 10 10"><defs><linearGradient id="tg" x1="0" y1="0" x2="1" y2="0"><stop offset="0" stop-color="#a9b0c6"/><stop offset="0.35" stop-color="#d4d8e2"/><stop offset="0.7" stop-color="#b3bfe6"/><stop offset="1" stop-color="#7f92d8"/></linearGradient></defs><path d="M1.6 3.5h7.2v5.2q0 0.5-0.5 0.5h-6.2q-0.5 0-0.5-0.5z" fill="url(#tg)"/><rect x="1.8" y="8.2" width="6.8" height="1.0" fill="#5f6fae" opacity="0.8"/><path d="M1.3 2.4q0-0.5 0.6-0.5h6.8q0.6 0 0.6 0.5v1.3h-8z" fill="#5a69b0"/><rect x="3.2" y="1.1" width="4" height="1.0" rx="0.5" fill="#b8bccb"/></svg></i></div>
<div class="c" style="left:172px;width:54.7px;top:334.90px;height:11.80px;background:#fff;"><span style="left:1.0px;">A014</span></div><div class="c" style="left:228.2px;width:205.5px;top:334.90px;height:11.80px;background:#fff;"><span style="left:0.4px;letter-spacing:-0.15px;">ALAVANCA DO FREIO DE MÃO</span></div><div class="c" style="left:435.2px;width:80.9px;top:334.90px;height:11.80px;background:#fff;"><span style="left:0.9px;">100</span></div><div class="c" style="left:517.9px;width:78.4px;top:334.90px;height:11.80px;background:#fff;"><span style="left:0.5px;">196,74</span></div><div class="c" style="left:598.2px;width:18.5px;top:334.90px;height:11.80px;background:#fff;"><i class="ic" style="left:4.4px;top:1.2px"><svg width="11" height="10" viewBox="0 0 11 10"><defs><linearGradient id="dg" x1="0" y1="0" x2="0.3" y2="1"><stop offset="0" stop-color="#f2f9ff"/><stop offset="0.55" stop-color="#e2f0fc"/><stop offset="1" stop-color="#86bdec"/></linearGradient></defs><rect x="2.6" y="0.5" width="7.4" height="8.1" rx="1.5" fill="url(#dg)" stroke="#68a6de" stroke-width="0.8"/><path d="M0.4 3.1L2.0 1.3L7.3 6.1L5.7 7.9z" fill="#f2b628"/><path d="M5.7 7.9L7.3 6.1L7.6 7.0L6.6 8.1z" fill="#5b5030" opacity="0.7"/><path d="M1.2 2.2L6.5 7.0" stroke="#fbe08a" stroke-width="0.5"/><path d="M-0.35 2.4L1.25 0.6L2.0 1.3L0.4 3.1z" fill="#e05a48"/></svg></i></div><div class="c" style="left:618.1px;width:18.8px;top:334.90px;height:11.80px;background:#fff;"><i class="ic" style="left:4.6px;top:1.0px"><svg width="10" height="10" viewBox="0 0 10 10"><defs><linearGradient id="tg" x1="0" y1="0" x2="1" y2="0"><stop offset="0" stop-color="#a9b0c6"/><stop offset="0.35" stop-color="#d4d8e2"/><stop offset="0.7" stop-color="#b3bfe6"/><stop offset="1" stop-color="#7f92d8"/></linearGradient></defs><path d="M1.6 3.5h7.2v5.2q0 0.5-0.5 0.5h-6.2q-0.5 0-0.5-0.5z" fill="url(#tg)"/><rect x="1.8" y="8.2" width="6.8" height="1.0" fill="#5f6fae" opacity="0.8"/><path d="M1.3 2.4q0-0.5 0.6-0.5h6.8q0.6 0 0.6 0.5v1.3h-8z" fill="#5a69b0"/><rect x="3.2" y="1.1" width="4" height="1.0" rx="0.5" fill="#b8bccb"/></svg></i></div>
<div class="c" style="left:172px;width:54.7px;top:347.60px;height:11.80px;"><span style="left:1.0px;">A021</span></div><div class="c" style="left:228.2px;width:205.5px;top:347.60px;height:11.80px;"><span style="left:0.4px;letter-spacing:-0.15px;">ADITIVO PARA RADIADOR COM SELANTE</span></div><div class="c" style="left:435.2px;width:80.9px;top:347.60px;height:11.80px;"><span style="left:0.9px;">100</span></div><div class="c" style="left:517.9px;width:78.4px;top:347.60px;height:11.80px;"><span style="left:0.5px;">55,00</span></div><div class="c" style="left:598.2px;width:18.5px;top:347.60px;height:11.80px;"><i class="ic" style="left:4.4px;top:1.2px"><svg width="11" height="10" viewBox="0 0 11 10"><defs><linearGradient id="dg" x1="0" y1="0" x2="0.3" y2="1"><stop offset="0" stop-color="#f2f9ff"/><stop offset="0.55" stop-color="#e2f0fc"/><stop offset="1" stop-color="#86bdec"/></linearGradient></defs><rect x="2.6" y="0.5" width="7.4" height="8.1" rx="1.5" fill="url(#dg)" stroke="#68a6de" stroke-width="0.8"/><path d="M0.4 3.1L2.0 1.3L7.3 6.1L5.7 7.9z" fill="#f2b628"/><path d="M5.7 7.9L7.3 6.1L7.6 7.0L6.6 8.1z" fill="#5b5030" opacity="0.7"/><path d="M1.2 2.2L6.5 7.0" stroke="#fbe08a" stroke-width="0.5"/><path d="M-0.35 2.4L1.25 0.6L2.0 1.3L0.4 3.1z" fill="#e05a48"/></svg></i></div><div class="c" style="left:618.1px;width:18.8px;top:347.60px;height:11.80px;"><i class="ic" style="left:4.6px;top:1.0px"><svg width="10" height="10" viewBox="0 0 10 10"><defs><linearGradient id="tg" x1="0" y1="0" x2="1" y2="0"><stop offset="0" stop-color="#a9b0c6"/><stop offset="0.35" stop-color="#d4d8e2"/><stop offset="0.7" stop-color="#b3bfe6"/><stop offset="1" stop-color="#7f92d8"/></linearGradient></defs><path d="M1.6 3.5h7.2v5.2q0 0.5-0.5 0.5h-6.2q-0.5 0-0.5-0.5z" fill="url(#tg)"/><rect x="1.8" y="8.2" width="6.8" height="1.0" fill="#5f6fae" opacity="0.8"/><path d="M1.3 2.4q0-0.5 0.6-0.5h6.8q0.6 0 0.6 0.5v1.3h-8z" fill="#5a69b0"/><rect x="3.2" y="1.1" width="4" height="1.0" rx="0.5" fill="#b8bccb"/></svg></i></div>
<div class="c" style="left:172px;width:54.7px;top:360.30px;height:11.80px;background:#fff;"><span style="left:1.0px;">A026</span></div><div class="c" style="left:228.2px;width:205.5px;top:360.30px;height:11.80px;background:#fff;"><span style="left:0.4px;letter-spacing:-0.15px;">ABRAÇADEIRA MÉDIA</span></div><div class="c" style="left:435.2px;width:80.9px;top:360.30px;height:11.80px;background:#fff;"><span style="left:0.9px;">100</span></div><div class="c" style="left:517.9px;width:78.4px;top:360.30px;height:11.80px;background:#fff;"><span style="left:0.5px;">5,00</span></div><div class="c" style="left:598.2px;width:18.5px;top:360.30px;height:11.80px;background:#fff;"><i class="ic" style="left:4.4px;top:1.2px"><svg width="11" height="10" viewBox="0 0 11 10"><defs><linearGradient id="dg" x1="0" y1="0" x2="0.3" y2="1"><stop offset="0" stop-color="#f2f9ff"/><stop offset="0.55" stop-color="#e2f0fc"/><stop offset="1" stop-color="#86bdec"/></linearGradient></defs><rect x="2.6" y="0.5" width="7.4" height="8.1" rx="1.5" fill="url(#dg)" stroke="#68a6de" stroke-width="0.8"/><path d="M0.4 3.1L2.0 1.3L7.3 6.1L5.7 7.9z" fill="#f2b628"/><path d="M5.7 7.9L7.3 6.1L7.6 7.0L6.6 8.1z" fill="#5b5030" opacity="0.7"/><path d="M1.2 2.2L6.5 7.0" stroke="#fbe08a" stroke-width="0.5"/><path d="M-0.35 2.4L1.25 0.6L2.0 1.3L0.4 3.1z" fill="#e05a48"/></svg></i></div><div class="c" style="left:618.1px;width:18.8px;top:360.30px;height:11.80px;background:#fff;"><i class="ic" style="left:4.6px;top:1.0px"><svg width="10" height="10" viewBox="0 0 10 10"><defs><linearGradient id="tg" x1="0" y1="0" x2="1" y2="0"><stop offset="0" stop-color="#a9b0c6"/><stop offset="0.35" stop-color="#d4d8e2"/><stop offset="0.7" stop-color="#b3bfe6"/><stop offset="1" stop-color="#7f92d8"/></linearGradient></defs><path d="M1.6 3.5h7.2v5.2q0 0.5-0.5 0.5h-6.2q-0.5 0-0.5-0.5z" fill="url(#tg)"/><rect x="1.8" y="8.2" width="6.8" height="1.0" fill="#5f6fae" opacity="0.8"/><path d="M1.3 2.4q0-0.5 0.6-0.5h6.8q0.6 0 0.6 0.5v1.3h-8z" fill="#5a69b0"/><rect x="3.2" y="1.1" width="4" height="1.0" rx="0.5" fill="#b8bccb"/></svg></i></div>
<div class="c" style="left:172px;width:54.7px;top:373.00px;height:11.80px;"><span style="left:1.0px;">A027</span></div><div class="c" style="left:228.2px;width:205.5px;top:373.00px;height:11.80px;"><span style="left:0.4px;letter-spacing:-0.15px;">ABRAÇADEIRA GRANDE</span></div><div class="c" style="left:435.2px;width:80.9px;top:373.00px;height:11.80px;"><span style="left:0.9px;">100</span></div><div class="c" style="left:517.9px;width:78.4px;top:373.00px;height:11.80px;"><span style="left:0.5px;">6,00</span></div><div class="c" style="left:598.2px;width:18.5px;top:373.00px;height:11.80px;"><i class="ic" style="left:4.4px;top:1.2px"><svg width="11" height="10" viewBox="0 0 11 10"><defs><linearGradient id="dg" x1="0" y1="0" x2="0.3" y2="1"><stop offset="0" stop-color="#f2f9ff"/><stop offset="0.55" stop-color="#e2f0fc"/><stop offset="1" stop-color="#86bdec"/></linearGradient></defs><rect x="2.6" y="0.5" width="7.4" height="8.1" rx="1.5" fill="url(#dg)" stroke="#68a6de" stroke-width="0.8"/><path d="M0.4 3.1L2.0 1.3L7.3 6.1L5.7 7.9z" fill="#f2b628"/><path d="M5.7 7.9L7.3 6.1L7.6 7.0L6.6 8.1z" fill="#5b5030" opacity="0.7"/><path d="M1.2 2.2L6.5 7.0" stroke="#fbe08a" stroke-width="0.5"/><path d="M-0.35 2.4L1.25 0.6L2.0 1.3L0.4 3.1z" fill="#e05a48"/></svg></i></div><div class="c" style="left:618.1px;width:18.8px;top:373.00px;height:11.80px;"><i class="ic" style="left:4.6px;top:1.0px"><svg width="10" height="10" viewBox="0 0 10 10"><defs><linearGradient id="tg" x1="0" y1="0" x2="1" y2="0"><stop offset="0" stop-color="#a9b0c6"/><stop offset="0.35" stop-color="#d4d8e2"/><stop offset="0.7" stop-color="#b3bfe6"/><stop offset="1" stop-color="#7f92d8"/></linearGradient></defs><path d="M1.6 3.5h7.2v5.2q0 0.5-0.5 0.5h-6.2q-0.5 0-0.5-0.5z" fill="url(#tg)"/><rect x="1.8" y="8.2" width="6.8" height="1.0" fill="#5f6fae" opacity="0.8"/><path d="M1.3 2.4q0-0.5 0.6-0.5h6.8q0.6 0 0.6 0.5v1.3h-8z" fill="#5a69b0"/><rect x="3.2" y="1.1" width="4" height="1.0" rx="0.5" fill="#b8bccb"/></svg></i></div>
<div class="c" style="left:172px;width:54.7px;top:385.70px;height:11.80px;background:#fff;"><span style="left:1.0px;">A028</span></div><div class="c" style="left:228.2px;width:205.5px;top:385.70px;height:11.80px;background:#fff;"><span style="left:0.4px;letter-spacing:-0.15px;">ALARME - RESGATE</span></div><div class="c" style="left:435.2px;width:80.9px;top:385.70px;height:11.80px;background:#fff;"><span style="left:0.9px;">100</span></div><div class="c" style="left:517.9px;width:78.4px;top:385.70px;height:11.80px;background:#fff;"><span style="left:0.5px;">70,00</span></div><div class="c" style="left:598.2px;width:18.5px;top:385.70px;height:11.80px;background:#fff;"><i class="ic" style="left:4.4px;top:1.2px"><svg width="11" height="10" viewBox="0 0 11 10"><defs><linearGradient id="dg" x1="0" y1="0" x2="0.3" y2="1"><stop offset="0" stop-color="#f2f9ff"/><stop offset="0.55" stop-color="#e2f0fc"/><stop offset="1" stop-color="#86bdec"/></linearGradient></defs><rect x="2.6" y="0.5" width="7.4" height="8.1" rx="1.5" fill="url(#dg)" stroke="#68a6de" stroke-width="0.8"/><path d="M0.4 3.1L2.0 1.3L7.3 6.1L5.7 7.9z" fill="#f2b628"/><path d="M5.7 7.9L7.3 6.1L7.6 7.0L6.6 8.1z" fill="#5b5030" opacity="0.7"/><path d="M1.2 2.2L6.5 7.0" stroke="#fbe08a" stroke-width="0.5"/><path d="M-0.35 2.4L1.25 0.6L2.0 1.3L0.4 3.1z" fill="#e05a48"/></svg></i></div><div class="c" style="left:618.1px;width:18.8px;top:385.70px;height:11.80px;background:#fff;"><i class="ic" style="left:4.6px;top:1.0px"><svg width="10" height="10" viewBox="0 0 10 10"><defs><linearGradient id="tg" x1="0" y1="0" x2="1" y2="0"><stop offset="0" stop-color="#a9b0c6"/><stop offset="0.35" stop-color="#d4d8e2"/><stop offset="0.7" stop-color="#b3bfe6"/><stop offset="1" stop-color="#7f92d8"/></linearGradient></defs><path d="M1.6 3.5h7.2v5.2q0 0.5-0.5 0.5h-6.2q-0.5 0-0.5-0.5z" fill="url(#tg)"/><rect x="1.8" y="8.2" width="6.8" height="1.0" fill="#5f6fae" opacity="0.8"/><path d="M1.3 2.4q0-0.5 0.6-0.5h6.8q0.6 0 0.6 0.5v1.3h-8z" fill="#5a69b0"/><rect x="3.2" y="1.1" width="4" height="1.0" rx="0.5" fill="#b8bccb"/></svg></i></div>
<div class="c" style="left:172px;width:54.7px;top:398.40px;height:11.80px;"><span style="left:1.0px;">A03</span></div><div class="c" style="left:228.2px;width:205.5px;top:398.40px;height:11.80px;"><span style="left:0.4px;letter-spacing:-0.15px;">ACOPLAMENTO DA ALAVANCA DE CAMBIO</span></div><div class="c" style="left:435.2px;width:80.9px;top:398.40px;height:11.80px;"><span style="left:0.9px;">100</span></div><div class="c" style="left:517.9px;width:78.4px;top:398.40px;height:11.80px;"><span style="left:0.5px;">43,00</span></div><div class="c" style="left:598.2px;width:18.5px;top:398.40px;height:11.80px;"><i class="ic" style="left:4.4px;top:1.2px"><svg width="11" height="10" viewBox="0 0 11 10"><defs><linearGradient id="dg" x1="0" y1="0" x2="0.3" y2="1"><stop offset="0" stop-color="#f2f9ff"/><stop offset="0.55" stop-color="#e2f0fc"/><stop offset="1" stop-color="#86bdec"/></linearGradient></defs><rect x="2.6" y="0.5" width="7.4" height="8.1" rx="1.5" fill="url(#dg)" stroke="#68a6de" stroke-width="0.8"/><path d="M0.4 3.1L2.0 1.3L7.3 6.1L5.7 7.9z" fill="#f2b628"/><path d="M5.7 7.9L7.3 6.1L7.6 7.0L6.6 8.1z" fill="#5b5030" opacity="0.7"/><path d="M1.2 2.2L6.5 7.0" stroke="#fbe08a" stroke-width="0.5"/><path d="M-0.35 2.4L1.25 0.6L2.0 1.3L0.4 3.1z" fill="#e05a48"/></svg></i></div><div class="c" style="left:618.1px;width:18.8px;top:398.40px;height:11.80px;"><i class="ic" style="left:4.6px;top:1.0px"><svg width="10" height="10" viewBox="0 0 10 10"><defs><linearGradient id="tg" x1="0" y1="0" x2="1" y2="0"><stop offset="0" stop-color="#a9b0c6"/><stop offset="0.35" stop-color="#d4d8e2"/><stop offset="0.7" stop-color="#b3bfe6"/><stop offset="1" stop-color="#7f92d8"/></linearGradient></defs><path d="M1.6 3.5h7.2v5.2q0 0.5-0.5 0.5h-6.2q-0.5 0-0.5-0.5z" fill="url(#tg)"/><rect x="1.8" y="8.2" width="6.8" height="1.0" fill="#5f6fae" opacity="0.8"/><path d="M1.3 2.4q0-0.5 0.6-0.5h6.8q0.6 0 0.6 0.5v1.3h-8z" fill="#5a69b0"/><rect x="3.2" y="1.1" width="4" height="1.0" rx="0.5" fill="#b8bccb"/></svg></i></div>
<div class="c" style="left:172px;width:54.7px;top:411.10px;height:11.80px;background:#fff;"><span style="left:1.0px;">abr</span></div><div class="c" style="left:228.2px;width:205.5px;top:411.10px;height:11.80px;background:#fff;"><span style="left:0.4px;">abraçadeira</span></div><div class="c" style="left:435.2px;width:80.9px;top:411.10px;height:11.80px;background:#fff;"><span style="left:0.9px;">100</span></div><div class="c" style="left:517.9px;width:78.4px;top:411.10px;height:11.80px;background:#fff;"><span style="left:0.5px;">3,00</span></div><div class="c" style="left:598.2px;width:18.5px;top:411.10px;height:11.80px;background:#fff;"><i class="ic" style="left:4.4px;top:1.2px"><svg width="11" height="10" viewBox="0 0 11 10"><defs><linearGradient id="dg" x1="0" y1="0" x2="0.3" y2="1"><stop offset="0" stop-color="#f2f9ff"/><stop offset="0.55" stop-color="#e2f0fc"/><stop offset="1" stop-color="#86bdec"/></linearGradient></defs><rect x="2.6" y="0.5" width="7.4" height="8.1" rx="1.5" fill="url(#dg)" stroke="#68a6de" stroke-width="0.8"/><path d="M0.4 3.1L2.0 1.3L7.3 6.1L5.7 7.9z" fill="#f2b628"/><path d="M5.7 7.9L7.3 6.1L7.6 7.0L6.6 8.1z" fill="#5b5030" opacity="0.7"/><path d="M1.2 2.2L6.5 7.0" stroke="#fbe08a" stroke-width="0.5"/><path d="M-0.35 2.4L1.25 0.6L2.0 1.3L0.4 3.1z" fill="#e05a48"/></svg></i></div><div class="c" style="left:618.1px;width:18.8px;top:411.10px;height:11.80px;background:#fff;"><i class="ic" style="left:4.6px;top:1.0px"><svg width="10" height="10" viewBox="0 0 10 10"><defs><linearGradient id="tg" x1="0" y1="0" x2="1" y2="0"><stop offset="0" stop-color="#a9b0c6"/><stop offset="0.35" stop-color="#d4d8e2"/><stop offset="0.7" stop-color="#b3bfe6"/><stop offset="1" stop-color="#7f92d8"/></linearGradient></defs><path d="M1.6 3.5h7.2v5.2q0 0.5-0.5 0.5h-6.2q-0.5 0-0.5-0.5z" fill="url(#tg)"/><rect x="1.8" y="8.2" width="6.8" height="1.0" fill="#5f6fae" opacity="0.8"/><path d="M1.3 2.4q0-0.5 0.6-0.5h6.8q0.6 0 0.6 0.5v1.3h-8z" fill="#5a69b0"/><rect x="3.2" y="1.1" width="4" height="1.0" rx="0.5" fill="#b8bccb"/></svg></i></div>
<div class="c" style="left:172px;width:54.7px;top:423.80px;height:11.80px;"><span style="left:1.0px;">AF</span></div><div class="c" style="left:228.2px;width:205.5px;top:423.80px;height:11.80px;"><span style="left:0.4px;letter-spacing:-0.15px;">ALAVANCA FREIO DE MÃO</span></div><div class="c" style="left:435.2px;width:80.9px;top:423.80px;height:11.80px;"><span style="left:0.9px;">100</span></div><div class="c" style="left:517.9px;width:78.4px;top:423.80px;height:11.80px;"><span style="left:0.5px;">99,00</span></div><div class="c" style="left:598.2px;width:18.5px;top:423.80px;height:11.80px;"><i class="ic" style="left:4.4px;top:1.2px"><svg width="11" height="10" viewBox="0 0 11 10"><defs><linearGradient id="dg" x1="0" y1="0" x2="0.3" y2="1"><stop offset="0" stop-color="#f2f9ff"/><stop offset="0.55" stop-color="#e2f0fc"/><stop offset="1" stop-color="#86bdec"/></linearGradient></defs><rect x="2.6" y="0.5" width="7.4" height="8.1" rx="1.5" fill="url(#dg)" stroke="#68a6de" stroke-width="0.8"/><path d="M0.4 3.1L2.0 1.3L7.3 6.1L5.7 7.9z" fill="#f2b628"/><path d="M5.7 7.9L7.3 6.1L7.6 7.0L6.6 8.1z" fill="#5b5030" opacity="0.7"/><path d="M1.2 2.2L6.5 7.0" stroke="#fbe08a" stroke-width="0.5"/><path d="M-0.35 2.4L1.25 0.6L2.0 1.3L0.4 3.1z" fill="#e05a48"/></svg></i></div><div class="c" style="left:618.1px;width:18.8px;top:423.80px;height:11.80px;"><i class="ic" style="left:4.6px;top:1.0px"><svg width="10" height="10" viewBox="0 0 10 10"><defs><linearGradient id="tg" x1="0" y1="0" x2="1" y2="0"><stop offset="0" stop-color="#a9b0c6"/><stop offset="0.35" stop-color="#d4d8e2"/><stop offset="0.7" stop-color="#b3bfe6"/><stop offset="1" stop-color="#7f92d8"/></linearGradient></defs><path d="M1.6 3.5h7.2v5.2q0 0.5-0.5 0.5h-6.2q-0.5 0-0.5-0.5z" fill="url(#tg)"/><rect x="1.8" y="8.2" width="6.8" height="1.0" fill="#5f6fae" opacity="0.8"/><path d="M1.3 2.4q0-0.5 0.6-0.5h6.8q0.6 0 0.6 0.5v1.3h-8z" fill="#5a69b0"/><rect x="3.2" y="1.1" width="4" height="1.0" rx="0.5" fill="#b8bccb"/></svg></i></div>

<div id="pag">
  <span class="abs" style="left:168px;top:1px;font-size:9px;color:#cdcdcd;white-space:nowrap">« anterior</span>
  <span class="abs" style="left:211.4px;top:1.6px;font-size:8.3px;letter-spacing:0.35px;font-weight:bold;color:#c8504a;white-space:nowrap">[1]</span>
  <a style="left:227.50px">2</a><a style="left:237.70px">3</a><a style="left:247.90px">4</a><a style="left:258.10px">5</a><a style="left:268.30px">6</a><a style="left:278.50px">7</a><a style="left:288.70px">8</a><a style="left:298.90px">9</a><a style="left:309.10px">10</a><a style="left:324.25px">11</a><a style="left:339.40px">12</a><a style="left:354.55px">13</a><a style="left:369.70px">14</a><a style="left:384.85px">15</a><a style="left:400.00px">16</a><a style="left:415.15px">17</a><a style="left:430.30px">18</a><a style="left:445.45px">19</a><a style="left:460.60px">20</a><a style="left:475.75px">21</a><a style="left:490.90px">22</a><a style="left:506.05px">23</a><a style="left:521.20px">24</a><a style="left:536.35px">25</a>
  <a style="left:552px">próximo »</a>
</div>
</body></html>
